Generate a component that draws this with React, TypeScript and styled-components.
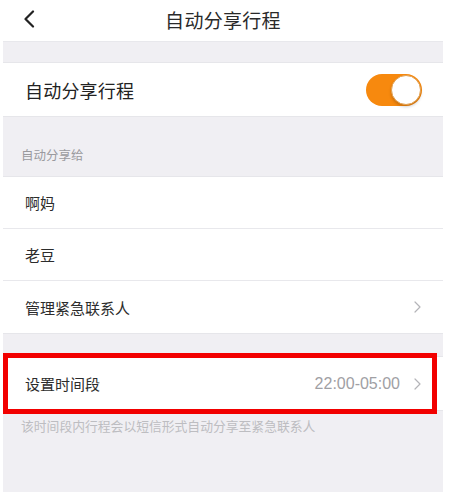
import styled, { createGlobalStyle } from 'styled-components';

const GlobalStyle = createGlobalStyle`
  html, body {
    margin: 0;
    padding: 0;
    background: #ffffff;
  }
  body {
    font-family: "Noto Sans CJK SC", "Noto Sans", sans-serif;
    -webkit-font-smoothing: antialiased;
  }
`;

const ChevronLeft = () => (
  <svg width="12" height="18" viewBox="0 0 12 18" fill="none">
    <path d="M10 1.5L2.5 9L10 16.5" stroke="#222" strokeWidth="2.2" strokeLinecap="round" strokeLinejoin="round" />
  </svg>
);

const ChevronRight = () => (
  <svg width="7" height="12" viewBox="0 0 7 12" fill="none">
    <path d="M1 1L6 6L1 11" stroke="#b4b4b8" strokeWidth="1.2" strokeLinecap="round" strokeLinejoin="round" />
  </svg>
);

export default function App() {
  return (
    <>
      <GlobalStyle />
      <Screen>
        <NavBar>
          <BackButton>
            <ChevronLeft />
          </BackButton>
          <NavTitle>自动分享行程</NavTitle>
        </NavBar>

        <Spacer $h={21} />

        <Group>
          <Row $h={53}>
            <MainLabel>自动分享行程</MainLabel>
            <Toggle $on>
              <Knob />
            </Toggle>
          </Row>
        </Group>

        <SectionHeader>自动分享给</SectionHeader>

        <Group>
          <Row $divider>
            <Label>啊妈</Label>
          </Row>
          <Row $divider>
            <Label>老豆</Label>
          </Row>
          <Row>
            <Label>管理紧急联系人</Label>
            <ChevronRight />
          </Row>
        </Group>

        <Spacer $h={22} />

        <Group>
          <Highlight>
            <Row $h={53}>
              <Label>设置时间段</Label>
              <Trailing>
                <Value>22:00-05:00</Value>
                <ChevronRight />
              </Trailing>
            </Row>
          </Highlight>
        </Group>

        <Note>该时间段内行程会以短信形式自动分享至紧急联系人</Note>
      </Screen>
    </>
  );
}

const Screen = styled.div`
  width: 440px;
  height: 492px;
  margin-left: 3px;
  background: #f0eff3;
  display: flex;
  flex-direction: column;
`;

const NavBar = styled.div`
  height: 41px;
  flex: none;
  background: #ffffff;
  display: flex;
  align-items: center;
  justify-content: center;
  position: relative;
  box-shadow: 0 1px 0 #e8e8ec;
`;

const BackButton = styled.div`
  position: absolute;
  left: 20px;
  top: 10px;
  display: flex;
`;

const NavTitle = styled.div`
  font-size: 19px;
  color: #2a2a2a;
  letter-spacing: 0.3px;
  margin-top: -2px;
`;

const Spacer = styled.div<{ $h: number }>`
  height: ${({ $h }) => $h}px;
  flex: none;
`;

const Group = styled.div`
  background: #ffffff;
  border-top: 1px solid #e6e6ea;
  border-bottom: 1px solid #e6e6ea;
`;

const Row = styled.div<{ $h?: number; $divider?: boolean }>`
  height: ${({ $h }) => $h ?? 52}px;
  box-sizing: border-box;
  padding: 0 22px 0 22px;
  display: flex;
  align-items: center;
  justify-content: space-between;
  border-bottom: ${({ $divider }) => ($divider ? '1px solid #e8e8ec' : 'none')};
`;

const MainLabel = styled.div`
  font-size: 18px;
  color: #222;
  letter-spacing: 0.2px;
`;

const Label = styled.div`
  font-size: 15px;
  color: #2c2c2c;
`;

const Toggle = styled.div<{ $on?: boolean }>`
  width: 56px;
  height: 32px;
  border-radius: 16px;
  background: ${({ $on }) => ($on ? '#f7890e' : '#e5e5ea')};
  display: flex;
  align-items: center;
  justify-content: ${({ $on }) => ($on ? 'flex-end' : 'flex-start')};
  padding: 0 1px;
  box-sizing: border-box;
  margin-right: -1px;
`;

const Knob = styled.div`
  width: 30px;
  height: 30px;
  border-radius: 50%;
  background: #ffffff;
  box-sizing: border-box;
  border: 1px solid #e2a050;
  box-shadow: 0 2px 3px rgba(0, 0, 0, 0.18);
`;

const SectionHeader = styled.div`
  height: 59px;
  box-sizing: border-box;
  padding: 0 0 12px 18px;
  display: flex;
  align-items: flex-end;
  font-size: 12.5px;
  color: #9a9a9e;
`;

const Highlight = styled.div`
  position: relative;
  &::after {
    content: '';
    position: absolute;
    left: 0;
    right: 6px;
    top: -4px;
    bottom: -4px;
    border: 5px solid #f20000;
    pointer-events: none;
  }
`;

const Trailing = styled.div`
  display: flex;
  align-items: center;
  gap: 14px;
`;

const Value = styled.div`
  font-family: "Liberation Sans", Arial, sans-serif;
  font-size: 16px;
  color: #a0a0a4;
`;

const Note = styled.div`
  padding: 5px 0 0 18px;
  font-size: 12.8px;
  color: #bdbdc1;
`;
